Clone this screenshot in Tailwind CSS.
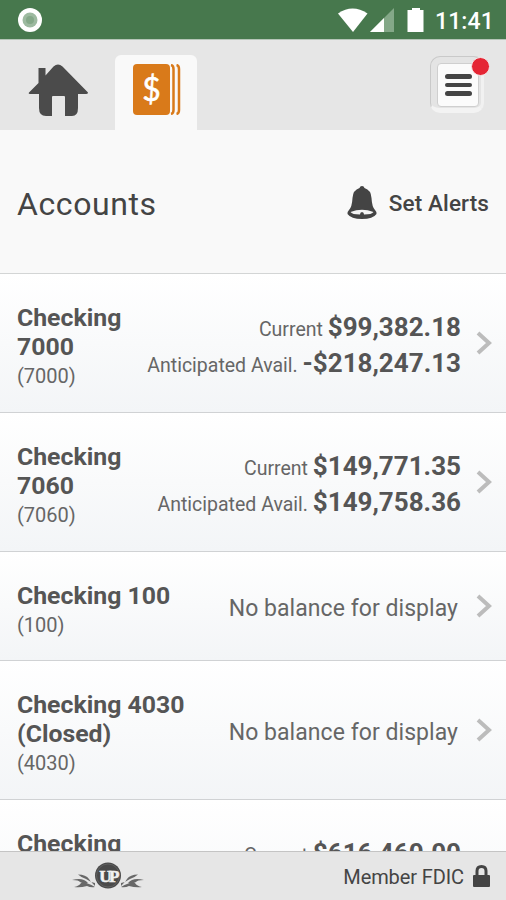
<!DOCTYPE html>
<html lang="en">
<head>
    <meta charset="UTF-8">
    <meta name="viewport" content="width=device-width, initial-scale=1.0">
    <title>Accounts</title>
    <script src="https://cdn.jsdelivr.net/npm/@tailwindcss/browser@4"></script>
</head>
<body class="bg-[#f9f9f9] font-[Roboto,sans-serif] text-[#555]">
    <div class="flex flex-col w-[506px] h-[900px] overflow-hidden">
        <!-- Status bar -->
        <div class="flex justify-between items-center h-10 shrink-0 bg-[#47784d] border-b border-[#b5c5b7] pl-[18px] pr-[13px]">
            <svg class="w-6 h-6" viewBox="0 0 24 24">
                <circle cx="12" cy="12" r="12" fill="#fff"/>
                <circle cx="12" cy="12" r="7.5" fill="#9dbaa0"/>
                <circle cx="12" cy="12" r="4" fill="#84a888"/>
            </svg>
            <div class="flex items-center text-white">
                <svg class="w-[90px] h-6" viewBox="0 0 90 24">
                    <path d="M1 5.5Q15.5-4.5 30.500 5.500L16 24Z" fill="#fff"/>
                    <path d="M57 0V24H33Z" fill="#84a888"/>
                    <path d="M47 10V24H33Z" fill="#fff"/>
                    <path d="M75 2V0h8v2h3.500v22h-16V2Z" fill="#fff"/>
                </svg>
                <span class="w-[58px] ml-[8px] pt-[4px] text-[23px] font-medium leading-6 tracking-[0.1px] whitespace-nowrap">11:41</span>
            </div>
        </div>

        <!-- Tabs -->
        <div class="flex justify-between h-[90px] shrink-0 bg-[#e6e6e6]">
            <div class="flex items-end">
                <div class="w-[115px] h-[75px] pl-7 pt-[9px]">
                    <svg class="w-[60px] h-[53px]" viewBox="0 0 60 53" fill="#4b4b4b">
                        <path d="M10.500 4h7v7.500L25.500 2.500Q30-1.500 34.500 2.500L60 28.500Q60 30 58 30H50V44Q50 52 44 52H37V33Q37 32 36 32H25Q24 32 24 33V52H18Q11 52 11 44V30H2Q0 30 1 28.500L10.500 19Z"/>
                    </svg>
                </div>
                <div class="w-[82px] h-[75px] rounded-t-md bg-[#f9f9f9] pl-[18px] pt-[9px]">
                    <svg class="w-[48px] h-[51px]" viewBox="0 0 48 51">
                        <rect width="37" height="51" rx="4" fill="#d97a1a"/>
                        <path d="M38 1Q40.500 1.500 40.500 5V46Q40.500 49.500 38 50M43.500 1Q46 1.500 46 5V46Q46 49.500 43.500 50" fill="none" stroke="#d97a1a" stroke-width="2.500"/>
                        <text x="18.500" y="36.500" text-anchor="middle" font-family="Lato" font-size="32" fill="#fff" stroke="#fff" stroke-width="0.500">$</text>
                    </svg>
                </div>
            </div>
            <div class="w-[78px] pl-[2px] pt-[16px]">
                <div class="relative w-[54px] h-[57px] rounded-[10px] bg-[#e4e4e4] border border-[#c9c9c9] border-b-[5px] border-b-[#f3f3f3] border-r-[#f1f1f1] border-r-3">
                    <div class="absolute left-[6px] top-[6px] w-[42px] h-[44px] rounded-[4px] bg-[#fbfbfb] border border-[#cfcfcf] flex flex-col items-center justify-center gap-1">
                        <div class="w-[27px] h-[4.500px] rounded-full bg-[#444]"></div>
                        <div class="w-[27px] h-[4.500px] rounded-full bg-[#444]"></div>
                        <div class="w-[27px] h-[4.500px] rounded-full bg-[#444]"></div>
                    </div>
                    <div class="absolute left-[40px] top-0 w-[19px] h-[19px] rounded-full bg-[#e52534] border border-[#f5e5e6]"></div>
                </div>
            </div>
        </div>

        <!-- Page title -->
        <div class="flex justify-between items-center h-36 shrink-0 border-b border-[#d3d5d5] pl-[17px] pr-[17px] pt-1 text-[#444]">
            <h1 class="text-[32px] tracking-[0.6px] leading-10">Accounts</h1>
            <div class="flex items-center">
                <svg class="w-[30px] h-[33px] mr-3 -mt-[2px]" viewBox="0 0 30 33">
                    <path d="M15 0q2 0 2.500 2Q24 4 24.500 12 25 21 28 24q2 2 1.500 4Q26 33 15 33T.5 28Q0 26 2 24 5 21 5.500 12 6 4 12.500 2 13 0 15 0Z" fill="#444"/>
                    <path d="M3.500 26Q15 21.500 26.500 26 25 28.500 17 28.500 17 26 15 26T13 28.500Q5 28.500 3.500 26Z" fill="#f5f5f5"/>
                </svg>
                <span class="text-[22.500px] font-medium tracking-[0.12px]">Set Alerts</span>
            </div>
        </div>

        <!-- Account list -->
        <div class="h-[577px] shrink-0 overflow-hidden">
            <div class="flex items-center h-[139px] border-b border-[#d0d2d4] bg-linear-to-b from-white to-[#f3f5f7] pl-[17px] pr-[14px]">
                <div class="w-[120px] pt-[7px]">
                    <h2 class="text-[24.800px] font-bold leading-[29px]">Checking<br>7000</h2>
                    <p class="text-[20px] leading-[30px] text-[#666]">(7000)</p>
                </div>
                <div class="flex-1 pt-[3px] text-right text-[19.500px] text-[#666] whitespace-nowrap">
                    <p class="h-9 leading-9">Current <b class="text-[26px] text-[#555]">$99,382.18</b></p>
                    <p class="h-9 leading-9">Anticipated Avail. <b class="text-[26px] text-[#555]">-$218,247.13</b></p>
                </div>
                <svg class="w-4 h-6 ml-[15px]" viewBox="0 0 16 24" fill="none" stroke="#bcbcbc" stroke-width="4"><path d="M2 2L13 12 2 22"/></svg>
            </div>
            <div class="flex items-center h-[139px] border-b border-[#d0d2d4] bg-linear-to-b from-white to-[#f3f5f7] pl-[17px] pr-[14px]">
                <div class="w-[120px] pt-[7px]">
                    <h2 class="text-[24.800px] font-bold leading-[29px]">Checking<br>7060</h2>
                    <p class="text-[20px] leading-[30px] text-[#666]">(7060)</p>
                </div>
                <div class="flex-1 pt-[3px] text-right text-[19.500px] text-[#666] whitespace-nowrap">
                    <p class="h-9 leading-9">Current <b class="text-[26px] text-[#555]">$149,771.35</b></p>
                    <p class="h-9 leading-9">Anticipated Avail. <b class="text-[26px] text-[#555]">$149,758.36</b></p>
                </div>
                <svg class="w-4 h-6 ml-[15px]" viewBox="0 0 16 24" fill="none" stroke="#bcbcbc" stroke-width="4"><path d="M2 2L13 12 2 22"/></svg>
            </div>
            <div class="flex items-center h-[109px] border-b border-[#d0d2d4] bg-linear-to-b from-white to-[#f3f5f7] pl-[17px] pr-[14px]">
                <div class="w-[180px] pt-[8px]">
                    <h2 class="text-[24.800px] font-bold leading-[29px]">Checking 100</h2>
                    <p class="text-[20px] leading-[30px] text-[#666]">(100)</p>
                </div>
                <p class="flex-1 pt-[6px] text-right text-[23px] leading-7 tracking-[0.05px] text-[#666] whitespace-nowrap">No balance for display</p>
                <svg class="w-4 h-6 ml-[18px]" viewBox="0 0 16 24" fill="none" stroke="#bcbcbc" stroke-width="4"><path d="M2 2L13 12 2 22"/></svg>
            </div>
            <div class="flex items-center h-[139px] border-b border-[#d0d2d4] bg-linear-to-b from-white to-[#f3f5f7] pl-[17px] pr-[14px]">
                <div class="w-[180px] pt-[7px]">
                    <h2 class="text-[24.800px] font-bold leading-[29px]">Checking 4030<br>(Closed)</h2>
                    <p class="text-[20px] leading-[30px] text-[#666]">(4030)</p>
                </div>
                <p class="flex-1 pt-[6px] text-right text-[23px] leading-7 tracking-[0.05px] text-[#666] whitespace-nowrap">No balance for display</p>
                <svg class="w-4 h-6 ml-[18px]" viewBox="0 0 16 24" fill="none" stroke="#bcbcbc" stroke-width="4"><path d="M2 2L13 12 2 22"/></svg>
            </div>
            <div class="flex items-start h-[139px] bg-linear-to-b from-white to-[#f3f5f7] pl-[17px] pr-[45px] pt-[29px]">
                <h2 class="w-[120px] text-[24.800px] font-bold leading-[29px]">Checking</h2>
                <p class="flex-1 pt-[6px] text-right text-[19.500px] leading-9 text-[#666] whitespace-nowrap">Current <b class="text-[26px] text-[#555]">$616,460.00</b></p>
            </div>
        </div>

        <!-- Footer -->
        <div class="flex justify-between items-center h-[49px] shrink-0 border-t border-[#c4c4c4] bg-[#e6e6e6] pl-[71px] pr-[16px]">
            <svg class="w-[74px] h-[28px]" viewBox="0 0 74 28">
                <g id="leaves" fill="#686868">
                    <path d="M24 24Q20 19 15 17Q11 16 7 12.500Q15 12.500 18 17L20 20L24 21Z"/>
                    <path d="M17 21Q12 15 1 18Q8 18 9 20Q12 22 17 21Z"/>
                    <path d="M24 25Q20 26 16 24Q9 26 3 25Q8 24 10 21Q14 19 24 25Z"/>
                </g>
                <use href="#leaves" transform="matrix(-1 0 0 1 74 0)"/>
                <circle cx="37" cy="13.500" r="13" fill="#4a4a4a"/>
                <circle cx="37" cy="13.500" r="11.500" fill="none" stroke="#777" stroke-width="0.500"/>
                <text x="37" y="19.500" text-anchor="middle" font-family="Liberation Serif" font-weight="bold" font-size="17" letter-spacing="-2.500" fill="#f2f2f2" stroke="#f2f2f2" stroke-width="0.600">UP</text>
            </svg>
            <div class="flex items-center text-[#444]">
                <span class="pt-[2px] text-[20px] tracking-[-0.1px]">Member FDIC</span>
                <svg class="w-[17px] h-[22px] ml-[9px]" viewBox="0 0 17 22">
                    <path d="M4 11V6Q4 1.500 8.500 1.500T13 6V11" fill="none" stroke="#444" stroke-width="3"/>
                    <rect y="10" width="17" height="12" rx="1" fill="#444"/>
                </svg>
            </div>
        </div>
    </div>
</body>
</html>
